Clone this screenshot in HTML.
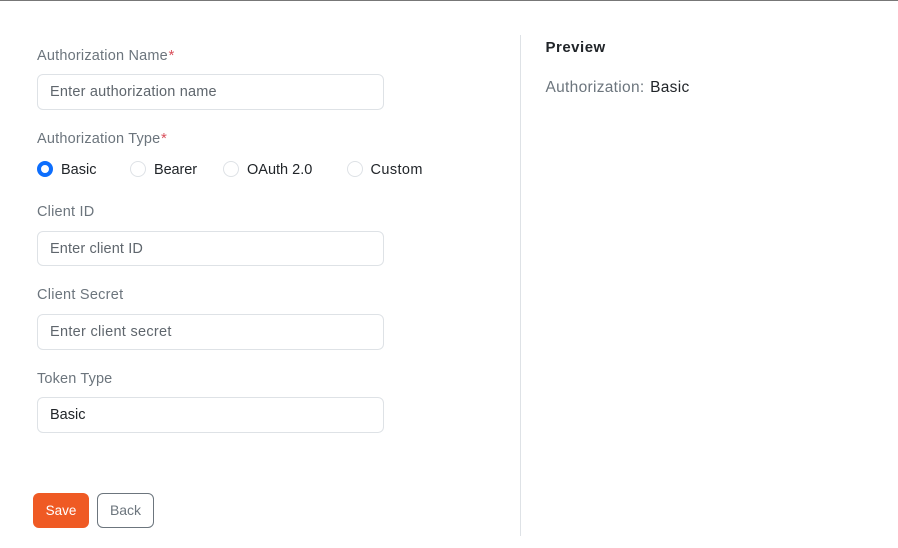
<!DOCTYPE html>
<html lang="en">
<head>
<meta charset="utf-8">
<title>Authorization</title>
<style>
html,body{margin:0;padding:0;background:#fff;}
body{width:898px;height:548px;position:relative;overflow:hidden;font-family:"Liberation Sans",sans-serif;}
.t{position:absolute;margin-top:1px;white-space:nowrap;line-height:20px;height:20px;font-size:14.5px;letter-spacing:.2px;}
.l{color:#6c757d;}
.p{color:#5f666d;}
.d{color:#212529;}
.r{color:#d9505c;}
.i{position:absolute;left:37px;width:347px;box-sizing:border-box;border:1px solid #dee2e6;border-radius:6px;background:#fff;}
.c{position:absolute;top:161px;width:16px;height:16px;box-sizing:border-box;border:1px solid #dee2e6;border-radius:50%;background:#fff;}
</style>
</head>
<body>
<div style="position:absolute;left:0;top:0;width:898px;height:1px;background:#777;"></div>
<div style="position:absolute;left:520px;top:35px;width:1px;height:501px;background:#dee2e6;"></div>

<div class="t l" style="left:37px;top:45px;">Authorization Name<span class="r" style="font-size:15px;margin-left:.5px;">*</span></div>
<div class="i" style="top:74px;height:36px;"></div>
<div class="t p" style="left:50px;top:81px;">Enter authorization name</div>

<div class="t l" style="left:37px;top:128px;">Authorization Type<span class="r" style="font-size:15px;margin-left:.5px;">*</span></div>
<div class="c" style="left:37px;border:4.5px solid #0d6efd;"></div>
<div class="t d" style="left:61px;top:159px;letter-spacing:0;">Basic</div>
<div class="c" style="left:130px;"></div>
<div class="t d" style="left:154px;top:159px;letter-spacing:-.1px;">Bearer</div>
<div class="c" style="left:223px;"></div>
<div class="t d" style="left:247px;top:159px;letter-spacing:0;">OAuth 2.0</div>
<div class="c" style="left:347px;"></div>
<div class="t d" style="left:370.5px;top:159px;letter-spacing:.4px;">Custom</div>

<div class="t l" style="left:37px;top:201px;">Client ID</div>
<div class="i" style="top:231px;height:35px;"></div>
<div class="t p" style="left:50px;top:238px;letter-spacing:.13px;">Enter client ID</div>

<div class="t l" style="left:37px;top:284px;letter-spacing:.26px;">Client Secret</div>
<div class="i" style="top:314px;height:36px;"></div>
<div class="t p" style="left:50px;top:321px;letter-spacing:.3px;">Enter client secret</div>

<div class="t l" style="left:37px;top:368px;letter-spacing:.15px;">Token Type</div>
<div class="i" style="top:397px;height:36px;"></div>
<div class="t d" style="left:50px;top:404px;letter-spacing:0;">Basic</div>

<div style="position:absolute;left:33px;top:493px;width:56px;height:35px;background:#ef5a24;border-radius:6px;color:#fff;font-size:13.5px;line-height:35px;text-align:center;">Save</div>
<div style="position:absolute;left:97px;top:493px;width:57px;height:35px;box-sizing:border-box;border:1px solid #6c757d;border-radius:6px;color:#6c757d;font-size:14px;line-height:33px;text-align:center;">Back</div>

<div class="t" style="left:545.5px;top:37px;font-weight:bold;color:#212529;font-size:15px;letter-spacing:.5px;">Preview</div>
<div class="t l" style="left:545.5px;top:77px;font-size:15.5px;letter-spacing:.3px;word-spacing:1px;">Authorization: <span class="d">Basic</span></div>
</body>
</html>
